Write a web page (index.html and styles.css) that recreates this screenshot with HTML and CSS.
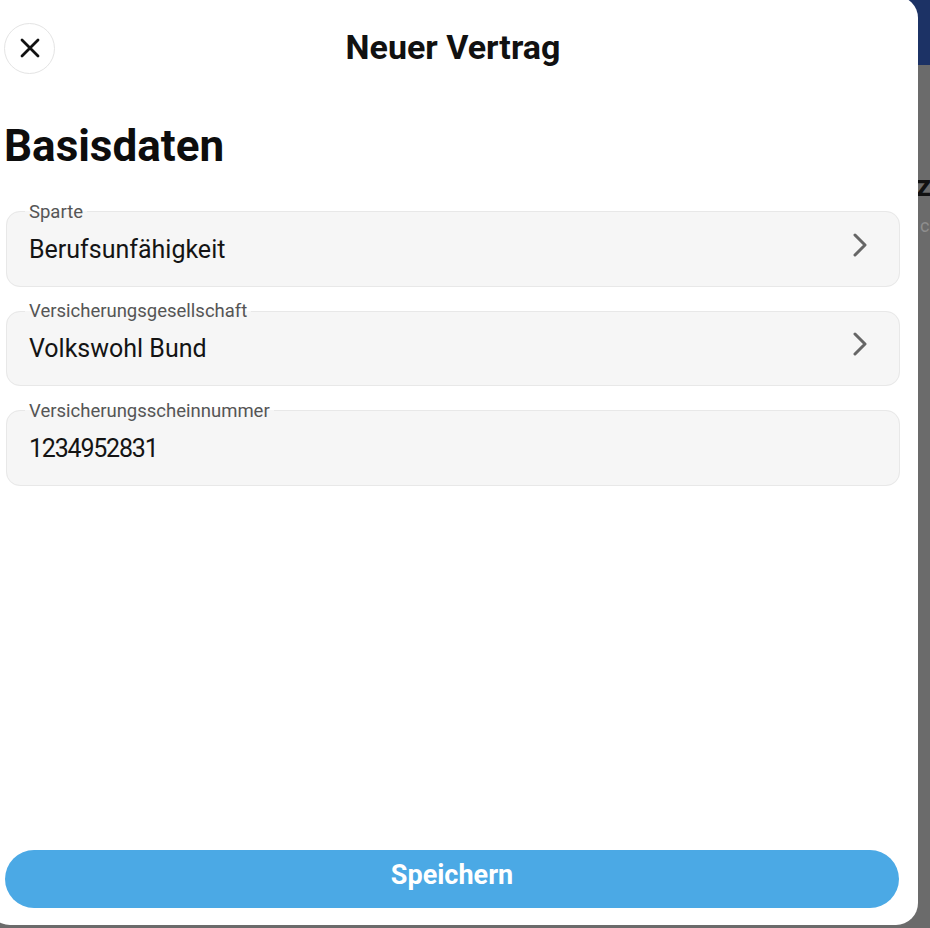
FILE: index.html
```html
<!DOCTYPE html>
<html lang="de">
<head>
<meta charset="utf-8">
<title>Neuer Vertrag</title>
<link rel="stylesheet" href="styles.css">
</head>
<body>
<div class="page">
  <div class="page-top"></div>
  <div class="page-body">
    <div class="page-title">z</div>
    <div class="page-sub">c</div>
  </div>
</div>
<div class="modal">
  <header class="modal-header">
    <button class="close" aria-label="Schließen">
      <svg width="20" height="20" viewBox="0 0 20 20"><path d="M2 2 L18 18 M18 2 L2 18" fill="none" stroke="#111" stroke-width="2.8" stroke-linecap="round"/></svg>
    </button>
    <h1 class="modal-title">Neuer Vertrag</h1>
    <span class="header-spacer"></span>
  </header>
  <h2 class="section-title">Basisdaten</h2>
  <div class="fields">
    <fieldset class="field">
      <legend>Sparte</legend>
      <div class="field-row">
        <span class="value">Berufsunfähigkeit</span>
        <svg class="chev" width="14" height="24" viewBox="0 0 14 24"><polyline points="2,2 12,12 2,22" fill="none" stroke="#666" stroke-width="3" stroke-linecap="round" stroke-linejoin="round"/></svg>
      </div>
    </fieldset>
    <fieldset class="field">
      <legend>Versicherungsgesellschaft</legend>
      <div class="field-row">
        <span class="value">Volkswohl Bund</span>
        <svg class="chev" width="14" height="24" viewBox="0 0 14 24"><polyline points="2,2 12,12 2,22" fill="none" stroke="#666" stroke-width="3" stroke-linecap="round" stroke-linejoin="round"/></svg>
      </div>
    </fieldset>
    <fieldset class="field">
      <legend>Versicherungsscheinnummer</legend>
      <div class="field-row">
        <span class="value value-num">1234952831</span>
      </div>
    </fieldset>
  </div>
  <div class="spacer"></div>
  <button class="save">Speichern</button>
</div>
</body>
</html>
```
FILE: styles.css
```css
html, body {
  margin: 0;
  padding: 0;
  width: 930px;
  height: 928px;
  overflow: hidden;
}
body {
  position: relative;
  font-family: Roboto, "Noto Sans", sans-serif;
  background: #6b6b6b;
}
.page {
  height: 928px;
  display: flex;
  flex-direction: column;
}
.page-top {
  height: 65px;
  background: #1c3265;
}
.page-body {
  padding: 102px 0 0 916px;
  white-space: nowrap;
}
.page-title {
  font-size: 30px;
  font-weight: 700;
  line-height: 38px;
  color: #111;
}
.page-sub {
  margin-top: 8px;
  margin-left: 4px;
  font-size: 18px;
  line-height: 26px;
  color: #8e8e8e;
}
.modal {
  position: absolute;
  left: -12px;
  top: -4px;
  width: 930px;
  height: 929px;
  box-sizing: border-box;
  background: #fff;
  border-radius: 22px;
  padding: 0 18px;
  display: flex;
  flex-direction: column;
}
.modal-header {
  height: 104px;
  display: grid;
  grid-template-columns: 50px 1fr 50px;
  align-items: center;
}
.close {
  width: 51px;
  height: 51px;
  margin-left: -2px;
  border-radius: 50%;
  border: 1.5px solid #e4e4e4;
  background: #fff;
  display: flex;
  align-items: center;
  justify-content: center;
  padding: 0;
}
.modal-title {
  margin: 0 0 2px;
  text-align: center;
  font-size: 34px;
  line-height: 40px;
  font-weight: 700;
  color: #111;
}
.section-title {
  margin: 19.7px 0 0 -2px;
  font-size: 44px;
  line-height: 52px;
  font-weight: 700;
  color: #0d0d0d;
}
.fields {
  margin-top: 30.3px;
  display: flex;
  flex-direction: column;
  gap: 14.5px;
}
.field {
  margin: 0;
  min-width: 0;
  padding: 0 22px 8px;
  border: 1.5px solid #e8e8e8;
  border-radius: 14px;
  background: #f6f6f6;
}
.field legend {
  padding: 0 4px;
  margin-left: -4px;
  font-size: 18.5px;
  line-height: 20px;
  color: #555;
}
.field-row {
  height: 56px;
  display: flex;
  align-items: center;
  justify-content: space-between;
}
.value {
  font-size: 25px;
  line-height: 30px;
  color: #141414;
}
.value-num {
  letter-spacing: -1.2px;
}
.chev {
  margin: 0 10px 10px 0;
}
.spacer {
  flex: 1;
}
.save {
  height: 58px;
  width: 100%;
  margin: 0 0 17px -1px;
  padding: 0 0 8px;
  border: none;
  border-radius: 29px;
  background: #4ba9e5;
  color: #fff;
  font-family: Roboto, "Noto Sans", sans-serif;
  font-size: 27px;
  font-weight: 700;
}
```
